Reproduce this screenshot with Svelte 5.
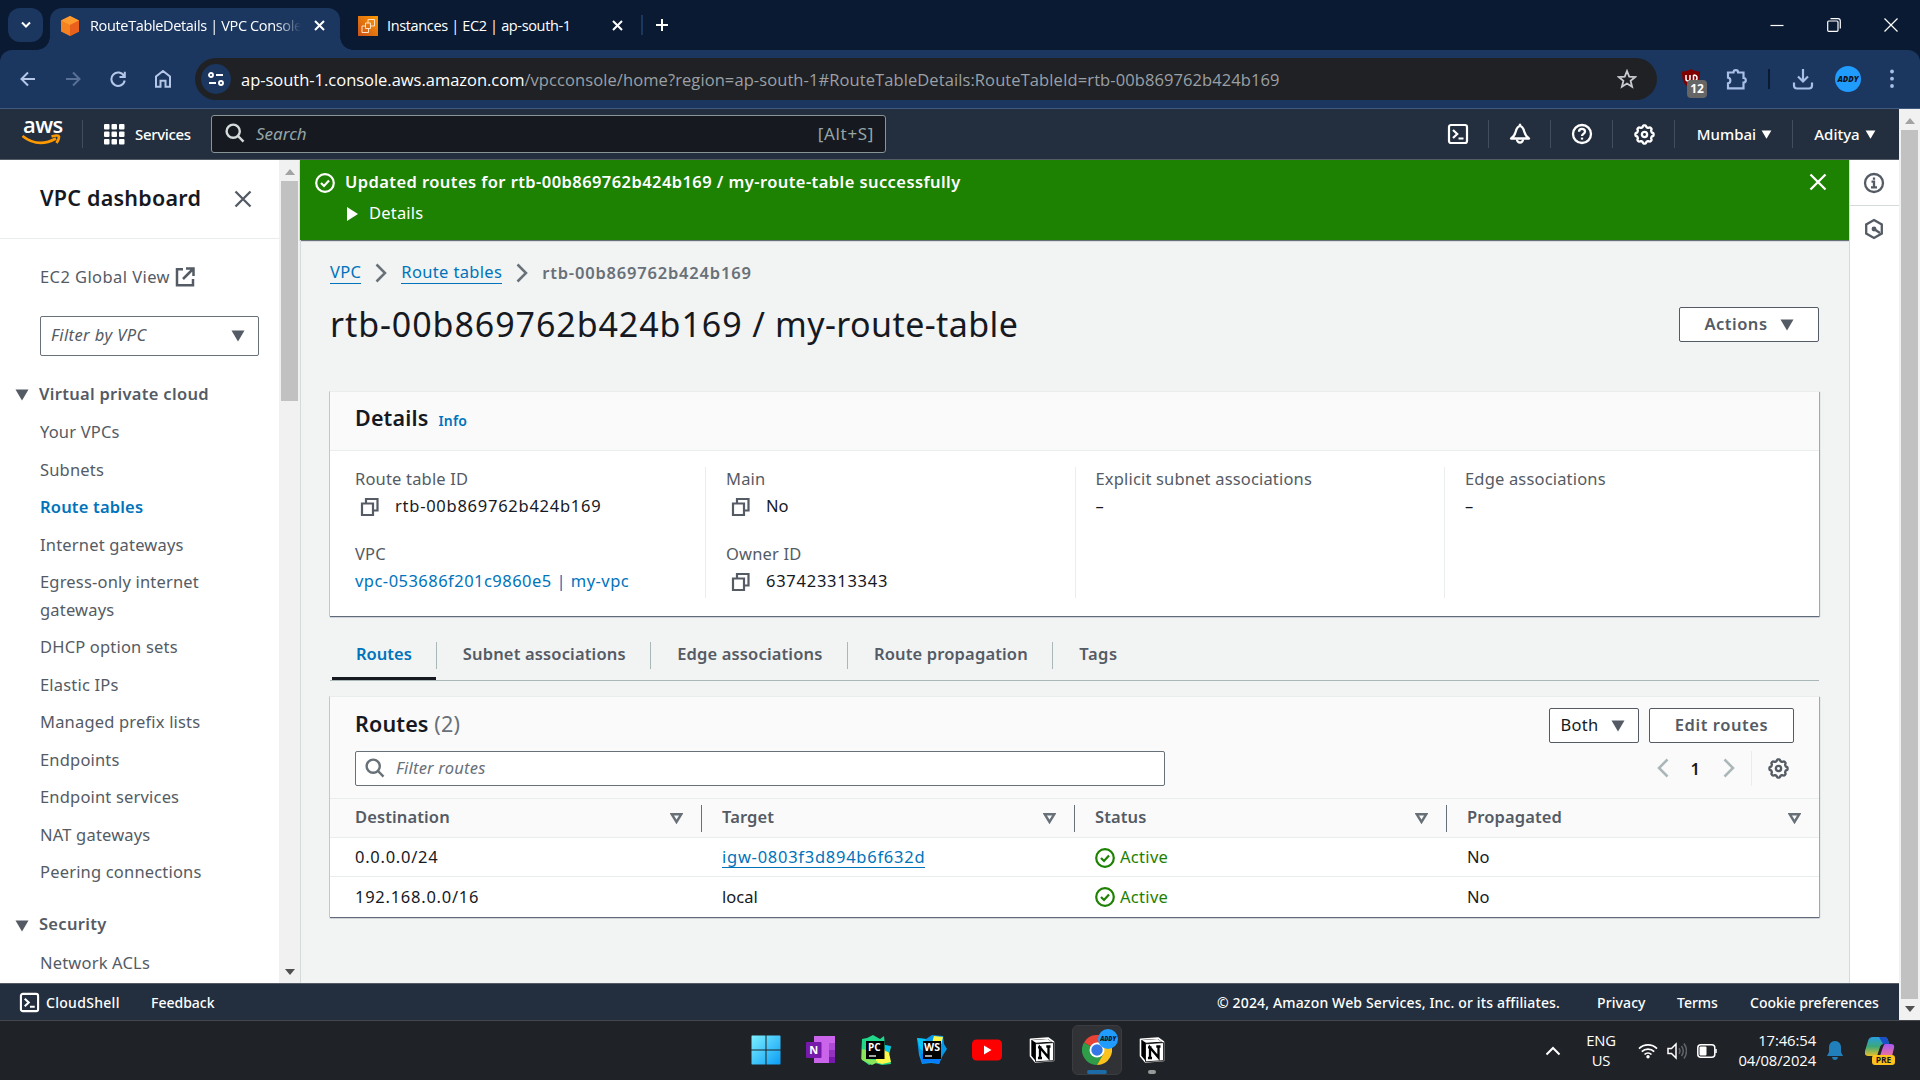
<script>
  const sideLinks = ['Your VPCs', 'Subnets', 'Route tables', 'Internet gateways', 'Egress-only internet gateways', 'DHCP option sets', 'Elastic IPs', 'Managed prefix lists', 'Endpoints', 'Endpoint services', 'NAT gateways', 'Peering connections'];
  const tabs = ['Routes', 'Subnet associations', 'Edge associations', 'Route propagation', 'Tags'];
  const columns = ['Destination', 'Target', 'Status', 'Propagated'];
  const rows = [
    { dest: '0.0.0.0/24', target: 'igw-0803f3d894b6f632d', link: true },
    { dest: '192.168.0.0/16', target: 'local', link: false }
  ];
  // Eight-lobed cog outline, sampled around the circle.
  const gear = 'M' + Array.from({ length: 96 }, (_, i) => {
    const a = (i / 96) * Math.PI * 2;
    const r = 7.9 + 0.8 * Math.tanh(2 * Math.cos(8 * a));
    return `${(10 + r * Math.sin(a)).toFixed(2)} ${(10 - r * Math.cos(a)).toFixed(2)}`;
  }).join('L') + 'z';
</script>

{#snippet copy()}
  <svg class="copy" width="20" height="20" viewBox="0 0 20 20"><path d="M2 6.500h11v11.500H2zM6 6.500V2h11.500v11.500H13" /></svg>
{/snippet}
{#snippet tri()}
  <svg class="tri" width="14" height="12" viewBox="0 0 14 12"><path d="M.5.500h13L7 11.500z" /></svg>
{/snippet}
{#snippet cross()}
  <svg class="cross" width="18" height="18" viewBox="0 0 18 18"><path d="M1.500 1.500l15 15M16.500 1.500l-15 15" /></svg>
{/snippet}
{#snippet okIcon()}
  <svg class="ok" width="20" height="20" viewBox="0 0 20 20"><circle cx="10" cy="10" r="8.800" /><path d="M6 10l3 3 5-5.500" /></svg>
{/snippet}
{#snippet shell()}
  <svg class="shell" width="22" height="22" viewBox="0 0 22 22"><rect x="2" y="2" width="18" height="18" rx="2" /><path d="M6 7l4.200 4L6 15M11.500 15.500h5" /></svg>
{/snippet}
{#snippet search()}
  <svg class="search" width="20" height="20" viewBox="0 0 20 20"><circle cx="8.200" cy="8.200" r="6.600" /><path d="M13 13l5.500 5.700" /></svg>
{/snippet}
{#snippet gearIcon()}
  <svg class="gear" width="21" height="21" viewBox="0 0 20 20"><path d={gear} /><circle cx="10" cy="10" r="2.500" /></svg>
{/snippet}
{#snippet notion()}
  <svg width="26" height="26" viewBox="0 0 26 26">
    <path d="M1.500 2.200L19 1l5.500 4v18.500L6.500 25 1.500 19z" fill="#000" stroke="#fff" stroke-width="1.600" stroke-linejoin="round" />
    <path d="M3 3.200L18.500 2l4 2.800-15.500 1z" fill="#fff" />
    <path d="M6.500 6.800l18-1.200v18l-18 1.200z" fill="#fff" stroke="#000" stroke-width=".8" />
    <path d="M11 21V10.500l8.500 10V9.500M9 10.300h3.500M17.300 9.500h4.200M9 21h4" fill="none" stroke="#000" stroke-width="2.300" />
  </svg>
{/snippet}

<div class="screen">
  <div class="tabstrip">
    <div class="tabsearch"><svg width="12" height="8" viewBox="0 0 12 8"><path d="M2 1.500l4 4 4-4" /></svg></div>
    <div class="tab active">
      <svg width="18" height="20" viewBox="0 0 18 20"><path d="M9 0l9 4.500v11L9 20 0 15.500v-11z" fill="#f58220" /><path d="M9 0l9 4.500L9 9 0 4.500z" fill="#ff9a2e" /><path d="M9 9l9-4.500v11L9 20z" fill="#e8601c" /></svg>
      <span class="tabtitle fade">RouteTableDetails | VPC Console</span>
      <svg class="x" width="11" height="11" viewBox="0 0 11 11"><path d="M1 1l9 9M10 1l-9 9" /></svg>
    </div>
    <div class="tab second">
      <svg width="20" height="20" viewBox="0 0 20 20"><defs><linearGradient id="ec2" x1="0" y1="1" x2="1" y2="0"><stop stop-color="#c8511b" /><stop offset="1" stop-color="#f90" /></linearGradient></defs><rect width="20" height="20" fill="url(#ec2)" /><path d="M7.500 7h5v5.500h-5zM10 7V3.500h6.500v6.500h-4M7.500 10H4v6.500h6.500v-4" fill="none" stroke="#ffe3c4" stroke-width="1" /></svg>
      <span class="tabtitle">Instances | EC2 | ap-south-1</span>
      <svg class="x" width="11" height="11" viewBox="0 0 11 11"><path d="M1 1l9 9M10 1l-9 9" /></svg>
    </div>
    <i class="tabsep"></i>
    <svg class="x plus" width="14" height="14" viewBox="0 0 14 14"><path d="M7 1v12M1 7h12" /></svg>
    <div class="winbtns">
      <svg width="14" height="14" viewBox="0 0 14 14"><path d="M.5 7.500h13" /></svg>
      <svg width="14" height="14" viewBox="0 0 14 14"><rect x=".7" y="3" width="10.300" height="10.300" rx="1" /><path d="M3.500.7h7.500a2.300 2.300 0 0 1 2.300 2.300v7.500" /></svg>
      <svg width="14" height="14" viewBox="0 0 14 14"><path d="M.5.500l13 13M13.500.5l-13 13" /></svg>
    </div>
  </div>

  <div class="toolbar">
    <div class="nav">
      <svg width="16" height="16" viewBox="0 0 16 16"><path d="M15 8H2M8 1.500L1.500 8 8 14.500" /></svg>
      <svg class="dim" width="16" height="16" viewBox="0 0 16 16"><path d="M1 8h13M8 1.500L14.500 8 8 14.500" /></svg>
      <svg width="16" height="16" viewBox="0 0 16 16"><path d="M14 5A6.700 6.700 0 1 0 14.700 9.500M14.800.8v5.200H9.500" /></svg>
      <svg width="16" height="18" viewBox="0 0 16 18"><path d="M1 16.800V6.500L8 1l7 5.500v10.300h-4.500v-6h-5v6z" /></svg>
    </div>
    <div class="omnibox">
      <div class="site"><svg width="16" height="14" viewBox="0 0 16 14"><circle cx="3" cy="3" r="2" /><path d="M8 3h7M1 11h7" /><circle cx="13" cy="11" r="2" /></svg></div>
      <span class="url"><b>ap-south-1.console.aws.amazon.com</b>/vpcconsole/home?region=ap-south-1#RouteTableDetails:RouteTableId=rtb-00b869762b424b169</span>
      <svg class="star" width="20" height="20" viewBox="0 0 20 20"><path d="M10 2l2.200 5.600 6 .4-4.600 3.800 1.500 5.900L10 14.500l-5.100 3.200 1.500-5.900L1.800 8l6-.4z" /></svg>
    </div>
    <div class="ext">
      <div class="ublock">
        <svg width="20" height="20" viewBox="0 0 20 20"><path d="M10 0c3 2 6 2.500 9 2.500 0 8-1 13-9 17.500C2 15.500 1 10.500 1 2.500 4 2.500 7 2 10 0z" fill="#800000" /><path d="M5 6v4q0 2 2 2t2-2V6M12.500 6v6q3.500 0 3.500-3t-3.500-3" fill="none" stroke="#fff" stroke-width="1.500" /></svg>
        <span>12</span>
      </div>
      <svg class="puzzle" width="22" height="22" viewBox="0 0 22 22"><path d="M2 4.500h5.500a2.300 2.300 0 0 1 4.600 0h5.400V10a2.300 2.300 0 0 1 0 4.600V20.300H2v-5a2.900 2.900 0 0 0 0-5.700z" /></svg>
      <i></i>
      <svg class="puzzle" width="22" height="22" viewBox="0 0 22 22"><path d="M11 1v12M6 8.500l5 5 5-5M2 14.500v3q0 3 3 3h12q3 0 3-3v-3" /></svg>
      <span class="avatar">ADDY</span>
      <svg class="dots" width="4" height="20" viewBox="0 0 4 20"><circle cx="2" cy="2.500" r="1.900" /><circle cx="2" cy="9.700" r="1.900" /><circle cx="2" cy="17" r="1.900" /></svg>
    </div>
  </div>

  <div class="page">
    <div class="console">
      <header>
        <div class="aws"><span>aws</span><svg width="40" height="14" viewBox="0 0 40 14"><path d="M1.500 2Q17 14.500 35 4.500" /><path class="tip" d="M30.500 2.500q7-2 7.500 0 .2 2.500-2.500 6.500" /></svg></div>
        <i class="hsep"></i>
        <svg class="apps" width="21" height="21" viewBox="0 0 21 21">{#each [0, 7.5, 15] as y}{#each [0, 7.5, 15] as x}<rect {x} {y} width="5.500" height="5.500" rx="1" />{/each}{/each}</svg>
        <span class="services">Services</span>
        <div class="hsearch">{@render search()}<em>Search</em><span>[Alt+S]</span></div>
        <div class="hicons">
          <div class="w62">{@render shell()}</div>
          <div class="w62"><svg width="22" height="22" viewBox="0 0 22 22"><path d="M2 15.500c2.700-1.500 3.700-3.500 4.600-6.500C7.500 5.800 8.500 3.200 11 3.200s3.500 2.600 4.400 5.800c.9 3 1.900 5 4.600 6.500z" stroke-linejoin="round" /><path d="M11 3V.8M8 16.500a3 3 0 0 0 6 0" /></svg></div>
          <div class="w62"><svg width="22" height="22" viewBox="0 0 22 22"><circle cx="11" cy="11" r="9" /><path d="M8 8.700C8 5 14 5 14 8.500c0 2.500-3 2.300-3 4.600" /><path d="M11 14.600v2" /></svg></div>
          <div class="w62">{@render gearIcon()}</div>
          <div class="mumbai">Mumbai {@render tri()}</div>
          <div class="aditya">Aditya {@render tri()}</div>
        </div>
      </header>

      <div class="middle">
        <aside>
          <div class="sidebody">
            <div class="sidetitle"><h3>VPC dashboard</h3>{@render cross()}</div>
            <div class="global">EC2 Global View <svg width="20" height="20" viewBox="0 0 20 20"><path d="M8 2.300H2v16h16V12M11 1.500h7.500V9M18.500 1.500L8 12" /></svg></div>
            <div class="vpcfilter"><em>Filter by VPC</em>{@render tri()}</div>
            <div class="group">{@render tri()}Virtual private cloud</div>
            {#each sideLinks as link}<div class="sidelink" class:current={link === 'Route tables'}>{link}</div>{/each}
            <div class="group security">{@render tri()}Security</div>
            <div class="sidelink">Network ACLs</div>
          </div>
          <div class="scroll side"><b></b><u></u><s></s></div>
        </aside>

        <main>
          <div class="flash">
            {@render okIcon()}
            <div class="flashtext"><strong>Updated routes for rtb-00b869762b424b169 / my-route-table successfully</strong><span><svg width="11" height="14" viewBox="0 0 11 14"><path d="M0 0l11 7-11 7z" /></svg>Details</span></div>
            {@render cross()}
          </div>
          <div class="content">
            <div class="crumbs"><a href="#vpc">VPC</a><svg width="12" height="20" viewBox="0 0 12 20"><path d="M1.500 1.500L10 10l-8.500 8.500" /></svg><a href="#rt">Route tables</a><svg width="12" height="20" viewBox="0 0 12 20"><path d="M1.500 1.500L10 10l-8.500 8.500" /></svg><b>rtb-00b869762b424b169</b></div>
            <div class="titlebar"><h1><span>rtb-00b869762b424b169 /</span> my-route-table</h1><button class="actions">Actions {@render tri()}</button></div>

            <section class="card details">
              <div class="cardhead"><h2>Details</h2><span>Info</span></div>
              <div class="fields">
                <div><label>Route table ID</label><p class="id">{@render copy()}rtb-00b869762b424b169</p><label>VPC</label><p class="blue">vpc-053686f201c9860e5 | my-vpc</p></div>
                <div><label>Main</label><p>{@render copy()}No</p><label>Owner ID</label><p class="id">{@render copy()}637423313343</p></div>
                <div><label>Explicit subnet associations</label><p>–</p></div>
                <div><label>Edge associations</label><p>–</p></div>
              </div>
            </section>

            <nav class="tabs">{#each tabs as tab, i}<span class:on={i === 0}>{tab}</span>{/each}</nav>

            <section class="card routes">
              <div class="rhead"><h2>Routes <small>(2)</small></h2><button class="both">Both {@render tri()}</button><button class="edit">Edit routes</button></div>
              <div class="rfilter">
                <div class="rinput">{@render search()}<em>Filter routes</em></div>
                <svg class="pg" width="12" height="20" viewBox="0 0 12 20"><path d="M10.500 1.500L2 10l8.500 8.500" /></svg><b>1</b><svg class="pg" width="12" height="20" viewBox="0 0 12 20"><path d="M1.500 1.500L10 10l-8.500 8.500" /></svg>
                <i></i>{@render gearIcon()}
              </div>
              <div class="trow thead">{#each columns as c}<div><span>{c}</span><svg class="sort" width="13" height="11" viewBox="0 0 13 11"><path d="M1.700 1.200h9.600L6.500 9z" /></svg></div>{/each}</div>
              {#each rows as r}
                <div class="trow"><div class="id">{r.dest}</div><div>{#if r.link}<a class="id" href="#igw">{r.target}</a>{:else}{r.target}{/if}</div><div class="green">{@render okIcon()}Active</div><div>No</div></div>
              {/each}
            </section>
          </div>
        </main>

        <div class="rail">
          <div><svg width="22" height="22" viewBox="0 0 22 22"><circle cx="11" cy="11" r="9" /><path d="M8.500 9.700H11v5M8 15.300h6M11 5.500v2.300" /></svg></div>
          <div class="hex"><svg width="22" height="22" viewBox="0 0 22 22"><path d="M11 2l7.800 4.500v9L11 20l-7.800-4.500v-9z" /><path d="M11 11l6 4" /><circle cx="11" cy="11" r="1.300" fill="#545b64" /></svg></div>
        </div>
      </div>

      <footer>{@render shell()}<span class="cs">CloudShell</span><span>Feedback</span><span class="copyright">© 2024, Amazon Web Services, Inc. or its affiliates.</span><span class="privacy">Privacy</span><span class="terms">Terms</span><span class="cookie">Cookie preferences</span></footer>
    </div>
    <div class="scroll main"><b></b><u></u><s></s></div>
  </div>

  <div class="taskbar">
    <div class="apps8">
      <div><svg width="30" height="30" viewBox="0 0 30 30"><defs><linearGradient id="win" x1="0" y1="0" x2="1" y2="1" gradientUnits="objectBoundingBox"><stop stop-color="#7df0ff" /><stop offset="1" stop-color="#0a9cf5" /></linearGradient></defs><path d="M1 .5h13.500v14H.5V1zM15.500.500H29l.5.5v13.500h-14zM.5 15.500h14v14H1l-.5-.5zM15.500 15.500h14V29l-.5.5H15.500z" fill="url(#win)" /></svg></div>
      <div><svg width="30" height="30" viewBox="0 0 30 30"><path d="M8 1h21v27H8z" fill="#ca64ea" /><path d="M23 8h6v7h-6z" fill="#ae4bd5" /><path d="M23 15h6v7h-6z" fill="#9332bf" /><path d="M23 22h6v6h-6z" fill="#7719aa" /><rect x="0" y="7" width="15.500" height="16" rx="1" fill="#7719aa" /><text x="7.700" y="19" text-anchor="middle" font-size="11" font-weight="700" fill="#fff">N</text></svg></div>
      <div><svg width="30" height="30" viewBox="0 0 30 30"><path d="M1 4l5-1 6-3 7 4 4-3 1 9 6 2-2 8 2 9-9 1-7-2-6 2-8-6z" fill="#21d789" /><path d="M24 14l4 4 2 9-9 2-7-2 2-5z" fill="#fcf84a" /><path d="M1 14l5 1v9l8 1 3 2-6 3-10-5z" fill="#8be55a" /><path d="M24 10l6 1-2 6-4-1z" fill="#07c3f2" /><rect x="5" y="6" width="18.500" height="18" fill="#000" /><text x="7" y="15.500" font-size="10" font-weight="700" fill="#fff">PC</text><path d="M8 21h7" stroke="#fff" stroke-width="1.300" /></svg></div>
      <div><svg width="30" height="30" viewBox="0 0 30 30"><path d="M0 3l9 1 6-4 11 1 1 8 3 5-4 6-4 9-8-1-9 1-3-9z" fill="#0797e9" /><path d="M17 1l9 1-2 8-9-2z" fill="#fcf84a" /><path d="M0 3l9 1-3 12-3-2z" fill="#07c3f2" /><path d="M4 19l1 9 9-1 8 2 2-8z" fill="#087cfa" /><rect x="6" y="6" width="18" height="18" fill="#000" /><text x="7" y="15.500" font-size="10" font-weight="700" fill="#fff" textLength="16" lengthAdjust="spacingAndGlyphs">WS</text><path d="M8 21h7" stroke="#fff" stroke-width="1.300" /></svg></div>
      <div><svg width="30" height="30" viewBox="0 0 30 30"><rect y="4.500" width="30" height="21" rx="4.500" fill="#f00" /><path d="M12 10.500l7.500 4.500-7.500 4.500z" fill="#fff" /></svg></div>
      <div>{@render notion()}</div>
      <div class="running chrome"><svg width="30" height="30" viewBox="0 0 30 30"><path d="M15 15L2 7.500A15 15 0 0 1 28 7.500z" fill="#ea4335" /><path d="M15 15L2 7.500A15 15 0 0 0 15 30l6.500-11z" fill="#2e9c48" /><path d="M15 15l6.500 3.800L15 30A15 15 0 0 0 28 7.500H15z" fill="#fcc31e" /><circle cx="15" cy="15" r="7.500" fill="#fff" /><circle cx="15" cy="15" r="5.700" fill="#3578e5" /></svg><span class="avatar mini">ADDY</span></div>
      <div class="minimized">{@render notion()}</div>
    </div>
    <div class="tray">
      <svg class="chev" width="16" height="10" viewBox="0 0 16 10"><path d="M1.500 8.500L8 2l6.500 6.500" /></svg>
      <div class="lang">ENG<br />US</div>
      <svg class="wifi" width="20" height="16" viewBox="0 0 20 16"><path d="M1 5.700a12.700 12.700 0 0 1 18 0M3.800 8.700a8.800 8.800 0 0 1 12.400 0M6.500 11.500a5 5 0 0 1 7 0" /><circle cx="10" cy="13.800" r="1.700" /></svg>
      <svg class="vol" width="20" height="18" viewBox="0 0 20 18"><path d="M1 6.500v5h3.500L9 16V2L4.500 6.500z" /><path class="faint" d="M12 6.300q2 2.700 0 5.400M14.500 4q3.500 5 0 10M17 1.500q5 7.500 0 15" /></svg>
      <svg class="bat" width="21" height="14" viewBox="0 0 21 14"><rect x=".8" y=".8" width="17" height="12.400" rx="3" /><path d="M19 5v4" /><rect class="fill" x="2.500" y="2.500" width="7" height="9" rx="1" /></svg>
      <div class="clock">17:46:54<br />04/08/2024</div>
      <svg class="bell" width="16" height="19" viewBox="0 0 16 19"><path d="M8 0C4 0 2 3 2 6.500V11L0 15h16l-2-4V6.500C14 3 12 0 8 0zM5 16h6q-.5 3-3 3t-3-3z" /></svg>
      <div class="copilot"><svg width="30" height="28" viewBox="0 0 30 28"><defs><linearGradient id="cpa" x1="0" y1="0" x2="0" y2="1"><stop stop-color="#2a9de1" /><stop offset=".5" stop-color="#3ba87a" /><stop offset="1" stop-color="#e8c02a" /></linearGradient><linearGradient id="cpb" x1="0" y1="0" x2="0" y2="1"><stop stop-color="#a559f0" /><stop offset="1" stop-color="#f0709c" /></linearGradient></defs><path d="M8 0h11q3 0 4 3l1 4h-5q-3 0-4 3l-3 9H3q-4 0-3-5L3 4q1-4 5-4z" fill="url(#cpa)" /><path d="M14 0h5q3 0 4 3l1 4h-6z" fill="#1b50c8" /><path d="M20 7h6q4 0 3 4l-2 8H15l3-9q1-3 2-3z" fill="url(#cpb)" /></svg><span>PRE</span></div>
    </div>
  </div>
</div>

<style>
  :global(body) { margin: 0; overflow: hidden; }
  .screen { width: 1920px; height: 1080px; display: flex; flex-direction: column; overflow: hidden; background: #0a1a33; font-family: "Noto Sans", sans-serif; font-size: 16.500px; color: #16191f; }
  .screen :global(*) { box-sizing: border-box; }
  svg { display: block; flex: none; fill: none; }
  h1, h2, h3, p { margin: 0; }
  a { color: #0073bb; text-decoration: none; }
  button { font: inherit; padding: 0; }

  .tabstrip { height: 50px; background: #0a1a33; display: flex; align-items: center; font-family: "Open Sans", sans-serif; font-size: 14.500px; color: #fff; flex: none; position: relative; z-index: 1; }
  .tabsearch { width: 35px; height: 34px; border-radius: 12px; margin-left: 8px; background: #1b365f; display: flex; align-items: center; justify-content: center; }
  .tabsearch path, .x path { stroke: #fff; stroke-width: 2; }
  .tab { display: flex; align-items: center; height: 42px; margin-top: 8px; padding-bottom: 7px; position: relative; }
  .tab.active { width: 290px; margin-left: 7px; background: #1b365f; border-radius: 12px 12px 0 0; padding-left: 11px; }
  .tab.active::before, .tab.active::after { content: ""; position: absolute; bottom: 0; width: 13px; height: 13px; }
  .tab.active::before { left: -13px; background: radial-gradient(circle at 0 0, transparent 12.500px, #1b365f 13px); }
  .tab.active::after { right: -13px; background: radial-gradient(circle at 100% 0, transparent 12.500px, #1b365f 13px); }
  .tabtitle { white-space: nowrap; overflow: hidden; letter-spacing: -.35px; }
  .fade { width: 211px; margin-left: 11px; margin-right: 13px; mask-image: linear-gradient(90deg, #000 88%, transparent); }
  .second { width: 300px; padding-left: 18px; }
  .second .tabtitle { width: 213px; margin-left: 9px; margin-right: 12px; }
  .tabsep { width: 2px; height: 20px; background: #1b365f; margin-left: 1px; }
  .plus { margin-left: 12px; }
  .winbtns { display: flex; gap: 43px; margin: 0 22px 0 auto; }
  .winbtns path, .winbtns rect { stroke: #fff; stroke-width: 1.200; }

  .toolbar { height: 59px; background: #1b365f; border-bottom: 1px solid #40597f; display: flex; align-items: center; flex: none; border-radius: 12px 12px 0 0; }
  .nav { display: flex; align-items: center; gap: 29px; width: 195px; padding-left: 20px; }
  .nav path { stroke: #b4c7e8; stroke-width: 2; }
  .dim { opacity: .4; }
  .omnibox { width: 1462px; height: 42px; border-radius: 21px; background: #202124; display: flex; align-items: center; font-family: "Open Sans", sans-serif; color: #9aa0a6; }
  .site { width: 30px; height: 30px; border-radius: 50%; background: #1b365f; margin-left: 6px; display: flex; align-items: center; justify-content: center; }
  .site path, .site circle { stroke: #fff; stroke-width: 1.900; }
  .url { margin-left: 10px; white-space: nowrap; letter-spacing: .09px; }
  .url b { color: #fff; font-weight: 400; letter-spacing: -.02px; }
  .star { margin-left: auto; margin-right: 20px; }
  .star path { stroke: #c7cad0; stroke-width: 1.800; }
  .ext { display: flex; align-items: center; flex: 1; }
  .ublock { position: relative; margin-left: 24px; width: 45px; }
  .ublock span { position: absolute; left: 6px; top: 11px; width: 20px; height: 18px; border-radius: 4px; background: #666; color: #fff; font: 700 12px/18px "Open Sans", sans-serif; text-align: center; }
  .puzzle path { stroke: #a8bfe6; stroke-width: 2.200; }
  .ext i { width: 2px; height: 20px; background: #0a1a33; margin: 0 22px 0 20px; }
  .avatar { width: 26px; height: 26px; border-radius: 50%; background: #209cff; color: #10131c; font: italic 800 8px/26px "Open Sans", sans-serif; text-align: center; margin-left: 21px; }
  .dots { margin-left: 29px; fill: #a8bfe6; }

  .page { height: 911px; display: flex; flex: none; }
  .console { width: 1899px; display: flex; flex-direction: column; }
  header { height: 51px; background: #232f3e; border-bottom: 1px solid #545b64; display: flex; align-items: center; color: #fff; font-size: 15px; font-weight: 500; flex: none; }
  .aws { width: 82px; padding-left: 21px; height: 51px; padding-top: 3px; }
  .aws span { display: block; font: 600 22px/24px "Open Sans", sans-serif; letter-spacing: -.6px; height: 22px; padding-left: 2px; }
  .aws path { stroke: #f90; stroke-width: 2.600; }
  .hsep { width: 1px; height: 28px; background: #414d5c; }
  .apps { fill: #fff; margin-left: 21px; }
  .services { width: 66px; margin-left: 10px; letter-spacing: -.35px; }
  .hsearch { width: 675px; height: 38px; margin-left: 10px; background: #16191f; border: 1px solid #879596; border-radius: 3px; display: flex; align-items: center; padding: 0 11px 2px 13px; font-size: 17px; font-weight: 400; color: #95a5a6; }
  .hsearch em { margin-left: 11px; flex: 1; }
  .hsearch span { letter-spacing: .65px; }
  .search circle, .search path { stroke: #d5dbdb; stroke-width: 2.400; }
  .hicons { display: flex; align-items: center; margin-left: auto; }
  .hicons > div { display: flex; align-items: center; justify-content: center; height: 28px; padding-left: 1px; }
  .hicons > div + div { border-left: 1px solid #414d5c; }
  .hicons path, .hicons circle, .hicons rect { stroke: #fff; stroke-width: 2.300; }
  .w62 { width: 62px; }
  .hicons .mumbai { width: 118px; gap: 5px; padding-left: 2px; }
  .hicons .aditya { width: 107px; gap: 5px; padding: 0 2px 0 0; }
  .tri { width: 14px; height: 12px; margin-top: 2px; }
  .tri path { fill: #545b64; stroke: none !important; }
  header .tri { width: 11px; height: 9px; margin-top: 0; }
  header .tri path { fill: #fff; }
  .shell rect, .shell path { stroke: #fff; stroke-width: 2.200; }

  .middle { height: 823px; display: flex; flex: none; }
  aside { width: 300px; display: flex; background: #fff; color: #545b64; }
  .sidebody { width: 279px; height: 823px; overflow: hidden; }
  .sidetitle { height: 79px; border-bottom: 1px solid #eaeded; display: flex; align-items: center; justify-content: space-between; padding: 0 27px 1px 40px; color: #16191f; }
  h3 { font-size: 21.500px; font-weight: 600; letter-spacing: .23px; margin-top: -3px; }
  .cross path { stroke: #545b64; stroke-width: 2.300; }
  .global { margin: 23px 0 0 40px; height: 28px; display: flex; align-items: center; gap: 5px; letter-spacing: .42px; }
  .global svg { margin-top: 2px; }
  .global path { stroke: #545b64; stroke-width: 2.500; }
  .vpcfilter { width: 219px; height: 40px; border: 1px solid #687078; border-radius: 2px; margin: 26px 0 0 40px; padding: 0 13px 4px 10px; display: flex; justify-content: space-between; align-items: center; }
  .vpcfilter em { letter-spacing: .4px; }
  .vpcfilter .tri { margin-top: 4px; }
  .group { height: 28px; margin-top: 23px; padding-left: 15px; display: flex; align-items: center; gap: 10px; font-weight: 600; margin-bottom: 11px; letter-spacing: .3px; }
  .group .tri { margin-top: 4px; }
  .security { margin-top: 24px; }
  .sidelink { margin: 0 60px 10px 40px; line-height: 27.500px; letter-spacing: .18px; }
  .current { color: #0073bb; font-weight: 600; }

  .scroll { width: 21px; background: #f1f1f1; display: flex; flex-direction: column; align-items: center; }
  .scroll b { width: 17px; background: #c1c1c1; order: 1; }
  .scroll u { border: 5.500px solid transparent; border-bottom-color: #a3a3a3; border-top: 0; border-bottom-width: 6px; margin: 9px 0 6px; }
  .scroll s { border: 5.500px solid transparent; border-top-color: #505050; border-bottom: 0; border-top-width: 6px; margin: auto 0 8px; order: 2; }
  .side b { height: 220px; }
  .main b { height: 869px; }

  main { width: 1549px; background: #f2f3f3; }
  .flash { height: 80px; background: #1d8102; color: #fff; display: flex; padding: 8px 22px 0 15px; box-shadow: 0 1px 1px #687078; }
  .flash .ok { margin-top: 5px; }
  .flash .ok circle, .flash .ok path { stroke: #fff; stroke-width: 2.200; }
  .flashtext { flex: 1; padding-left: 10px; line-height: 29px; }
  .flashtext strong { display: block; height: 30px; line-height: 28px; font-weight: 600; letter-spacing: .42px; }
  .flashtext span { display: flex; align-items: center; gap: 11px; padding-left: 2px; letter-spacing: .2px; }
  .flashtext svg { fill: #fff; margin-top: 3px; }
  .flash .cross { margin-top: 5px; }
  .flash .cross path { stroke: #fff; }
  .content { padding: 0 30px 0 29px; border-left: 1px solid #d5dbdb; height: 743px; }
  .crumbs { height: 65px; display: flex; align-items: center; color: #687078; letter-spacing: .34px; }
  .crumbs a { border-bottom: 1px solid #0073bb; line-height: 22px; }
  .crumbs b { font-weight: 600; letter-spacing: .8px; }
  .crumbs svg { margin: 0 14px; }
  .crumbs path { stroke: #687078; stroke-width: 2.500; }
  .titlebar { height: 86px; display: flex; justify-content: space-between; width: 1489px; }
  h1 { font-size: 34px; line-height: 38px; font-weight: 400; white-space: nowrap; letter-spacing: .4px; }
  h1 span { letter-spacing: .92px; }
  button { background: #fff; border: 1px solid #545b64; border-radius: 2px; color: #545b64; font-weight: 600; display: flex; align-items: center; justify-content: center; padding-bottom: 2px; }
  .actions { width: 140px; height: 35px; margin-top: 2px; gap: 12px; letter-spacing: .5px; }
  .card { width: 1489px; background: #fff; border-top: 1px solid #eaeded; box-shadow: 0 1px 1px #5f6b7a, 1px 1px 1px #aab7b8, -1px 0 0 #d5dbdb; }
  .details { height: 225px; }
  .cardhead { height: 59px; background: #fafafa; border-bottom: 1px solid #eaeded; display: flex; align-items: center; padding: 0 25px 7px; }
  h2 { font-size: 21.500px; font-weight: 600; letter-spacing: .15px; }
  .cardhead span { font-size: 14px; font-weight: 600; color: #0073bb; margin: 5px 0 0 10px; letter-spacing: .2px; }
  .fields { display: flex; padding-top: 16px; }
  .fields > div { height: 131px; padding-left: 20px; width: 369.500px; border-left: 1px solid #eaeded; }
  .fields > div:first-child { width: 375px; padding-left: 25px; border: 0; }
  label { display: block; color: #545b64; line-height: 27px; letter-spacing: .17px; }
  .fields label:first-child { margin-top: -2px; }
  .fields p { height: 27px; line-height: 27px; display: flex; align-items: center; margin-bottom: 21px; }
  .fields .blue { color: #0073bb; letter-spacing: .47px; }
  .id { letter-spacing: .74px; }
  .copy { margin: 3px 15px 0 5px; }
  .copy path { stroke: #545b64; stroke-width: 2.200; }
  .tabs { height: 50px; margin: 15px 0; border-bottom: 1px solid #aab7b8; display: flex; align-items: center; padding-left: 2px; width: 1489px; letter-spacing: .15px; }
  .tabs span { position: relative; height: 27px; line-height: 24px; padding: 0 24.500px 0 26px; font-weight: 600; color: #545b64; border-right: 1px solid #aab7b8; }
  .tabs span:last-child { border: 0; letter-spacing: .5px; }
  .tabs span:first-child { padding: 0 24px; letter-spacing: 0; }
  .tabs .on { color: #0073bb; }
  .tabs .on::after { content: ""; position: absolute; left: 0; right: 0; bottom: -11px; height: 3px; background: #16191f; }
  .routes { height: 221px; }
  .rhead { height: 54px; padding: 11px 25px 0; display: flex; background: #fafafa; }
  h2 small { font-size: inherit; font-weight: 400; color: #687078; }
  .rhead h2 { margin-right: auto; line-height: 32px; }
  .both { width: 90px; height: 35px; color: #16191f; font-weight: 400; gap: 13px; margin-right: 10px; padding-right: 2px; letter-spacing: .25px; }
  .edit { width: 145px; height: 35px; letter-spacing: .58px; }
  .rfilter { height: 48px; background: #fafafa; border-bottom: 1px solid #eaeded; padding: 0 30px 13px 25px; display: flex; align-items: center; }
  .rinput { width: 810px; height: 35px; border: 1px solid #687078; border-radius: 2px; background: #fff; display: flex; align-items: center; padding: 0 0 1px 9px; gap: 11px; color: #687078; margin-right: auto; letter-spacing: .2px; }
  .rinput circle, .rinput path { stroke: #687078; }
  .pg path { stroke: #aab7b8; stroke-width: 2.500; }
  .rfilter b { font-weight: 600; margin: 0 23px 0 22px; }
  .rfilter i { width: 1px; height: 35px; background: #eaeded; margin: 0 16px; }
  .gear path, .gear circle { stroke: #545b64; stroke-width: 2.200; }
  header .gear path, header .gear circle { stroke: #fff; }
  .trow { display: grid; grid-template-columns: 372px 373px 372px 1fr; height: 39px; align-items: center; border-bottom: 1px solid #eaeded; padding-bottom: 1px; }
  .trow:last-child { border: 0; }
  .trow > div { padding-left: 20px; display: flex; align-items: center; }
  .trow > div:first-child { padding-left: 25px; }
  .trow a { border-bottom: 1px solid #0073bb; line-height: 21px; }
  .thead { background: #fafafa; color: #545b64; font-weight: 600; height: 39px; letter-spacing: .12px; padding-bottom: 0; }
  .thead > div { height: 27px; justify-content: space-between; padding-right: 18px; border-right: 1px solid #687078; padding-bottom: 3px; }
  .thead > div:last-child { border: 0; }
  .sort { margin-top: 4px; }
  .sort path { stroke: #687078; stroke-width: 2.400; }
  .trow .green { color: #1d8102; gap: 5px; letter-spacing: .3px; }
  .green .ok { margin-top: 2px; }
  .green circle, .green path { stroke: #1d8102; stroke-width: 2.200; }
  .rail { width: 50px; background: #fff; border-left: 1px solid #d5dbdb; }
  .rail div { height: 46px; display: flex; align-items: center; justify-content: center; border-bottom: 1px solid #d5dbdb; padding-right: 2px; }
  .rail .hex { border: 0; }
  .rail path, .rail circle { stroke: #545b64; stroke-width: 2.300; }

  footer { height: 37px; background: #232f3e; border-top: 1px solid #545b64; color: #fff; display: flex; align-items: center; font-size: 14px; font-weight: 500; padding: 0 20px 0 19px; white-space: nowrap; }
  footer .shell { width: 21px; height: 21px; margin-right: 6px; }
  .cs { width: 105px; letter-spacing: .3px; }
  .copyright { margin-left: auto; width: 380px; letter-spacing: .15px; }
  .privacy { width: 80px; letter-spacing: .1px; }
  .terms { width: 73px; }
  .cookie { width: 129px; }

  .taskbar { height: 60px; flex: none; background: #1f2227; border-top: 1px solid #44484c; display: flex; color: #fff; font-family: "Open Sans", sans-serif; }
  .apps8 { display: flex; gap: 5.200px; margin-left: 741px; padding-top: 4px; }
  .apps8 > div { width: 50px; height: 50px; border-radius: 6px; display: flex; align-items: center; justify-content: center; position: relative; border: 1px solid transparent; }
  .apps8 .running { background: #303236; border-color: #3a3c40; }
  .running::after, .minimized::after { content: ""; position: absolute; bottom: 0; width: 20px; height: 4px; border-radius: 2px; background: #1b6ca8; }
  .minimized::after { width: 8px; background: #999; }
  .avatar.mini { position: absolute; left: 25px; top: 3px; width: 20px; height: 20px; font-size: 6px; line-height: 20px; margin: 0; }
  .tray { display: flex; align-items: center; margin-left: auto; font-size: 14.800px; line-height: 20px; width: 375px; }
  .chev path { stroke: #fff; stroke-width: 2; }
  .lang { width: 34px; text-align: center; margin-left: 23px; letter-spacing: -.2px; margin-top: -2px; }
  .wifi { margin-left: 20px; }
  .wifi path { stroke: #fff; stroke-width: 1.700; }
  .wifi circle, .fill { fill: #fff; }
  .vol { margin-left: 9px; }
  .vol path, .bat path, .bat rect { stroke: #fff; stroke-width: 1.500; }
  .vol .faint { stroke: #62656a; }
  .bat .fill { stroke: none; }
  .bat { margin-left: 10px; }
  .clock { width: 86px; text-align: right; margin-left: 12px; margin-top: -2px; letter-spacing: -.1px; white-space: nowrap; }
  .bell { margin-left: 11px; fill: #2180bb; }
  .copilot { position: relative; margin-left: 22px; }
  .copilot span { position: absolute; left: 7px; top: 18px; width: 23px; height: 10px; border-radius: 3px; background: #fdc21d; color: #16191f; font: 700 8.500px/10px "Open Sans", sans-serif; text-align: center; }
</style>
